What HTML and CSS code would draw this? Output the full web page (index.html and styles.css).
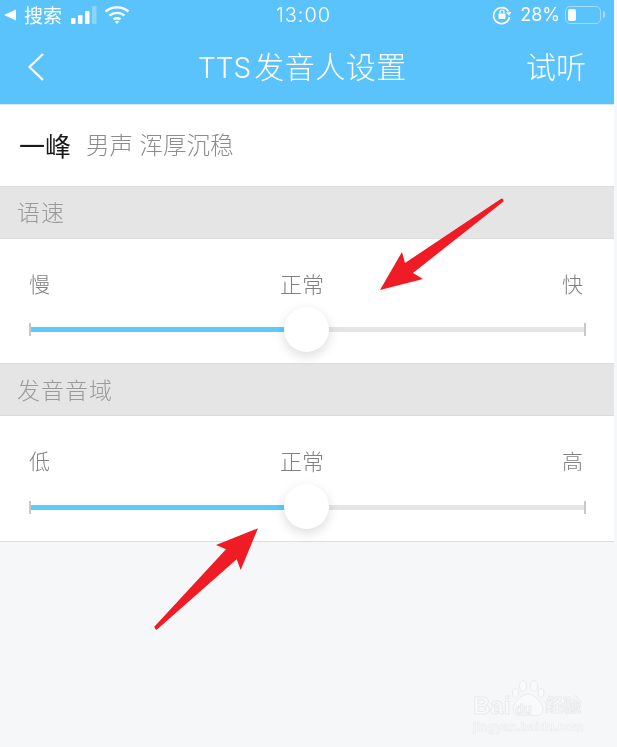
FILE: index.html
```html
<!DOCTYPE html>
<html lang="zh">
<head>
<meta charset="utf-8">
<title>TTS发音人设置</title>
<link rel="stylesheet" href="styles.css">
</head>
<body>
<div class="phone">
  <header class="top">
    <div class="status">
      <div class="status-left">
        <svg class="back-tri" width="12" height="12" viewBox="0 0 12 12"><path d="M0 6 12 .5V11.500Z" fill="#fff"/></svg>
        <span class="carrier">搜索</span>
        <svg class="signal" width="28" height="20" viewBox="0 0 28 20"><rect x="0" y="13" width="4.500" height="6" rx="1" fill="#fff"/><rect x="7" y="10" width="4.500" height="9" rx="1" fill="#fff"/><rect x="14" y="6" width="4.500" height="13" rx="1" fill="#fff"/><rect x="21" y="1" width="4.500" height="18" rx="1" fill="#fff" opacity=".3"/></svg>
        <svg class="wifi" width="26" height="20" viewBox="0 0 26 20"><path d="M1.500 6.500C8 1 18 1 24.500 6.500M5.500 10.500C10 7 16 7 20.500 10.500M9.500 14.300C11.500 13 14.500 13 16.500 14.300" fill="none" stroke="#fff" stroke-width="2.400"/><path d="M10.800 16.500 13 19l2.200-2.500c-1.300-.9-3.100-.9-4.400 0Z" fill="#fff"/></svg>
      </div>
      <span class="clock">13:00</span>
      <div class="status-right">
        <svg class="lock" width="20" height="20" viewBox="0 0 20 20"><path d="M16.500 6.500A8 8 0 1 0 17.500 12" fill="none" stroke="#fff" stroke-width="1.600"/><path d="M14 7.500h5.500L17 11Z" fill="#fff" transform="rotate(-8 16 9)"/><rect x="6.500" y="8.500" width="7" height="5.500" rx="1" fill="#fff"/><path d="M8 8.500V7a2 2 0 0 1 4 0v1.500" fill="none" stroke="#fff" stroke-width="1.200"/></svg>
        <span class="pct">28%</span>
        <div class="battery"><div class="battery-fill"></div></div>
        <div class="battery-cap"></div>
      </div>
    </div>
    <nav class="nav">
      <svg class="chevron" width="18" height="30" viewBox="0 0 18 30"><path d="M16 2 2.500 15 16 28" fill="none" stroke="#fff" stroke-width="2.200"/></svg>
      <h1 class="title"><span class="title-latin">TTS</span>发音人设置</h1>
      <span class="action">试听</span>
    </nav>
  </header>
  <section class="voice"><span class="voice-name">一峰</span><span class="voice-desc">男声 浑厚沉稳</span></section>
  <div class="section-head">语速</div>
  <section class="slider-row">
    <div class="labels"><span>慢</span><span class="label-mid">正常</span><span>快</span></div>
    <div class="track"><div class="fill"></div><div class="knob"></div></div>
  </section>
  <div class="section-head section-head-low">发音音域</div>
  <section class="slider-row slider-row-last">
    <div class="labels"><span>低</span><span class="label-mid">正常</span><span>高</span></div>
    <div class="track"><div class="fill"></div><div class="knob"></div></div>
  </section>
</div>
<svg class="arrow arrow-one" width="130" height="100" viewBox="0 0 130 100"><path d="M1 95 23 57 26 68 122.500 3.500Q125 3.500 124.500 6.500L34 78 44 84Z" fill="#ef1c25"/></svg>
<svg class="arrow arrow-two" width="110" height="110" viewBox="0 0 110 110"><path d="M105 6.300 63 23 73 27.300 1.300 104.700Q2 107.500 3.700 107.700L83.700 37.300 87.700 48Z" fill="#ef1c25"/></svg>
<div class="watermark">
  <svg class="paw" width="34" height="38" viewBox="0 0 34 38"><g fill="#f9fafb" stroke="#e9eaec" stroke-width="1"><ellipse cx="4.500" cy="13" rx="3" ry="4.500"/><ellipse cx="12" cy="6" rx="3.500" ry="5.500"/><ellipse cx="23" cy="6" rx="3.500" ry="5.500"/><ellipse cx="30" cy="13" rx="3" ry="4.500"/><path d="M17 14c6 0 15 9 15 15 0 8-9 7-15 6-6 1-15 2-15-6 0-6 9-15 15-15Z"/></g></svg>
  <div class="wm-main"><span class="wm-bai">Bai</span><span class="wm-du">du</span><span class="wm-cn">经验</span></div>
  <div class="wm-url">jingyan.baidu.com</div>
</div>
</body>
</html>
```
FILE: styles.css
```css
* { box-sizing: border-box; }
html, body { margin: 0; padding: 0; }
body {
  width: 617px;
  height: 747px;
  overflow: hidden;
  position: relative;
  background: #f6f7f9;
  font-family: "Inter", "Noto Sans CJK SC", sans-serif;
}
.phone { width: 614px; filter: blur(.35px); }
.top { height: 105px; background: #5ac3fc; color: #fff; border-bottom: 1px solid #d8e9f5; display: flex; flex-direction: column; }
.status { height: 32px; display: grid; grid-template-columns: 1fr auto 1fr; align-items: center; padding: 0 9px 3px 4px; }
.status-left, .status-right { display: flex; align-items: center; }
.status-right { justify-content: flex-end; }
.carrier { font-size: 19px; margin-left: 8px; }
.signal { margin-left: 9px; }
.wifi { margin-left: 5px; }
.clock { font-size: 20px; font-weight: 300; letter-spacing: .9px; margin-left: -2px; }
.lock { margin-right: 8px; }
.pct { font-size: 18px; margin-right: 5px; }
.battery { width: 36px; height: 18px; border: 1px solid #a3dcfc; border-radius: 5px; padding: 2px; }
.battery-fill { width: 8px; height: 100%; background: #fff; border-radius: 2px; }
.battery-cap { width: 2px; height: 7px; margin-left: 2px; background: #a3dcfc; border-radius: 0 2px 2px 0; }
.nav { flex: 1; display: flex; align-items: center; padding: 0 28px 2px 27px; }
.title { margin: 0 0 0 153px; font-size: 30px; font-weight: 300; line-height: 40px; white-space: nowrap; letter-spacing: .5px; }
.title-latin { margin-right: 3px; font-size: 28px; letter-spacing: 0; }
.action { margin-left: auto; font-size: 30px; font-weight: 300; line-height: 40px; }
.voice { height: 81px; background: #fff; display: flex; align-items: center; padding: 0 19px 3px; }
.voice-name { font-size: 26px; color: #1a1a1a; margin-right: 15px; }
.voice-desc { font-size: 23.500px; color: #8c8c8c; font-weight: 300; }
.section-head { height: 53px; background: #e5e5e5; border-top: 1px solid #dcdcdc; border-bottom: 1px solid #dcdcdc; color: #9a9a9a; font-size: 23px; font-weight: 300; padding: 7px 0 0 17px; line-height: 38px; letter-spacing: 1px; }
.section-head-low { padding-top: 8px; }
.slider-row { height: 124px; background: #fff; padding: 27px 28px 0 29px; }
.labels { display: flex; justify-content: space-between; font-size: 21px; color: #808080; font-weight: 300; line-height: 38px; padding-right: 3px; }
.label-mid { font-size: 22px; margin-right: 8px; }
.track { position: relative; margin-top: 23px; height: 5px; background: #e5e5e5; }
.track::before, .track::after { content: ""; position: absolute; top: -4px; width: 2px; height: 13px; background: #c8c8c8; }
.track::before { left: 0; }
.track::after { right: 0; }
.fill { width: 256px; height: 100%; background: #5accfb; }
.knob { position: absolute; left: 255px; top: -20px; width: 45px; height: 45px; border-radius: 50%; background: #fff; box-shadow: 0 4px 12px rgba(0,0,0,.14); z-index: 1; }
.slider-row-last { height: 126px; border-bottom: 1px solid #dcdcdc; }
.slider-row-last .track { margin-top: 24px; }
.slider-row-last .knob { top: -21px; }
.arrow { position: absolute; }
.arrow-one { left: 379px; top: 195px; }
.arrow-two { left: 153px; top: 522px; }
.watermark { position: absolute; left: 472px; top: 680px; width: 112px; height: 56px; color: #f9fafb; filter: blur(.5px); }
.paw { position: absolute; left: 39px; top: 0; }
.wm-main { position: absolute; left: 1px; top: 14px; display: flex; align-items: center; font-weight: 700; white-space: nowrap; line-height: 24px; -webkit-text-stroke: 1px #e9eaec; }
.wm-bai { font-size: 24px; font-family: "Liberation Sans", sans-serif; }
.wm-du { font-size: 13px; margin-left: 5px; width: 30px; padding-top: 6px; line-height: 18px; }
.wm-cn { font-size: 18px; }
.wm-url { position: absolute; left: 1px; top: 40px; font-size: 12.600px; line-height: 14px; font-family: "Liberation Sans", sans-serif; font-weight: 700; white-space: nowrap; -webkit-text-stroke: .6px #e9eaec; }
```
